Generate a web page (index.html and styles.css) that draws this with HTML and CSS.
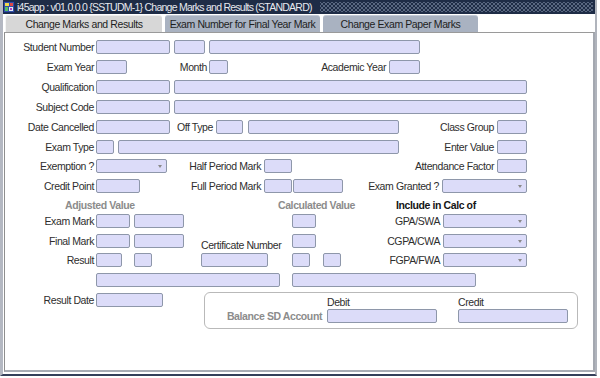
FILE: index.html
```html
<!DOCTYPE html>
<html>
<head>
<meta charset="utf-8">
<title>Change Marks and Results</title>
<link rel="stylesheet" href="styles.css">
</head>
<body>
<div class="window">
  <div class="titlebar">
    <svg class="appicon" width="12" height="12" viewBox="0 0 12 12">
      <rect x="0.5" y="0.5" width="11" height="11" fill="#3050a8" stroke="#1a2a60"/>
      <rect x="2" y="2" width="4" height="3" fill="#f2d84a"/>
      <rect x="7" y="2" width="3" height="3" fill="#e04848"/>
      <rect x="2" y="6" width="3" height="4" fill="#58c060"/>
      <rect x="6" y="6" width="4" height="4" fill="#e8e8f0"/>
      <rect x="7" y="7" width="2" height="2" fill="#b040c0"/>
    </svg>
    <span class="title">i45app : v01.0.0.0 {SSTUDM-1} Change Marks and Results (STANDARD)</span>
    <span class="dots"></span>
  </div>
  <div class="tabs">
    <div class="tab active">Change Marks and Results</div>
    <div class="tab">Exam Number for Final Year Mark</div>
    <div class="tab">Change Exam Paper Marks</div>
  </div>
  <div class="panel">
    <div class="row">
      <span class="lbl">Student Number</span>
      <input class="fld w74" type="text">
      <input class="fld w31 ml4" type="text">
      <input class="fld w211 ml4" type="text">
    </div>
    <div class="row">
      <span class="lbl">Exam Year</span>
      <input class="fld w31" type="text">
      <span class="lb w82 pr2">Month</span>
      <input class="fld w19" type="text">
      <span class="lb w161">Academic Year</span>
      <input class="fld w31" type="text">
    </div>
    <div class="row">
      <span class="lbl">Qualification</span>
      <input class="fld w74" type="text">
      <input class="fld w353 ml4" type="text">
    </div>
    <div class="row">
      <span class="lbl">Subject Code</span>
      <input class="fld w74" type="text">
      <input class="fld w353 ml4" type="text">
    </div>
    <div class="row">
      <span class="lbl">Date Cancelled</span>
      <input class="fld w74" type="text">
      <span class="lb w46">Off Type</span>
      <input class="fld w27" type="text">
      <input class="fld w151 ml5" type="text">
      <span class="lb w98">Class Group</span>
      <input class="fld w30" type="text">
    </div>
    <div class="row mb5">
      <span class="lbl">Exam Type</span>
      <input class="fld w18" type="text">
      <input class="fld w281 ml4" type="text">
      <span class="lb w98">Enter Value</span>
      <input class="fld w30" type="text">
    </div>
    <div class="row">
      <span class="lbl">Exemption ?</span>
      <div class="fld sel w71"><span class="arrow"></span></div>
      <span class="lb w97">Half Period Mark</span>
      <input class="fld w28" type="text">
      <span class="lb w205">Attendance Factor</span>
      <input class="fld w30" type="text">
    </div>
    <div class="row">
      <span class="lbl">Credit Point</span>
      <input class="fld w44" type="text">
      <span class="lb w124">Full Period Mark</span>
      <input class="fld w28" type="text">
      <input class="fld w50 ml1" type="text">
      <span class="lb w99">Exam Granted ?</span>
      <div class="fld sel w85"><span class="arrow"></span></div>
    </div>
    <div class="hdr">
      <span class="hd-adj">Adjusted Value</span>
      <span class="hd-calc">Calculated Value</span>
      <span class="hd-inc">Include in Calc of</span>
    </div>
    <div class="row">
      <span class="lbl">Exam Mark</span>
      <input class="fld w34" type="text">
      <input class="fld w50 ml4" type="text">
      <input class="fld w24 ml108" type="text">
      <span class="lb w127">GPA/SWA</span>
      <div class="fld sel w84"><span class="arrow"></span></div>
    </div>
    <div class="row mb5">
      <span class="lbl">Final Mark</span>
      <input class="fld w34" type="text">
      <input class="fld w50 ml4" type="text">
      <span class="cert">Certificate Number</span>
      <input class="fld w24" type="text">
      <span class="lb w127">CGPA/CWA</span>
      <div class="fld sel w84"><span class="arrow"></span></div>
    </div>
    <div class="row">
      <span class="lbl">Result</span>
      <input class="fld w26" type="text">
      <input class="fld w18 ml12" type="text">
      <input class="fld w67 ml49" type="text">
      <input class="fld w18 ml24" type="text">
      <input class="fld w18 ml13" type="text">
      <span class="lb w102">FGPA/FWA</span>
      <div class="fld sel w84"><span class="arrow"></span></div>
    </div>
    <div class="row mb5">
      <span class="lbl"></span>
      <input class="fld w184" type="text">
      <input class="fld w184 ml12" type="text">
    </div>
    <div class="row row-last">
      <span class="lbl">Result Date</span>
      <input class="fld w67" type="text">
      <fieldset class="group">
        <span></span>
        <span class="grp-head">Debit</span>
        <span></span>
        <span class="grp-head">Credit</span>
        <span class="grp-lbl">Balance SD Account</span>
        <input class="fld w110" type="text">
        <span></span>
        <input class="fld w110" type="text">
      </fieldset>
    </div>
  </div>
</div>
</body>
</html>
```

FILE: styles.css
```css
* { box-sizing: border-box; }
html, body { margin: 0; padding: 0; }
body {
  width: 600px;
  height: 378px;
  overflow: hidden;
  background: #ffffff;
  font-family: "Liberation Sans", Arial, sans-serif;
  font-size: 10.5px;
  letter-spacing: -0.4px;
  color: #2e2e2e;
}

.window {
  width: 597px;
  height: 376px;
  border-left: 3px solid #b4b8c2;
  border-right: 2px solid #b0b4bc;
  border-bottom: 2px solid #34405a;
  padding-bottom: 2px;
  display: flex;
  flex-direction: column;
}

/* title bar */
.titlebar {
  height: 14px;
  flex: none;
  background: #1e2c46;
  display: flex;
  align-items: center;
  color: #e6e8ee;
  font-size: 10.5px;
}
.appicon { flex: none; margin: 0 2px 0 0; }
.title { white-space: nowrap; letter-spacing: -0.75px; }
.dots {
  flex: 1;
  height: 10px;
  margin: 0 2px 0 8px;
  background-image:
    radial-gradient(circle, #6e7c95 0.6px, transparent 1px),
    radial-gradient(circle, #6e7c95 0.6px, transparent 1px);
  background-size: 4px 4px, 4px 4px;
  background-position: 0 0, 2px 2px;
}

/* tabs */
.tabs {
  height: 18px;
  flex: none;
  display: flex;
  align-items: flex-end;
  gap: 3px;
  padding-left: 2px;
}
.tab {
  width: 155px;
  height: 17px;
  display: flex;
  align-items: center;
  justify-content: center;
  background: #a9b2c1;
  border-top: 1px solid #c3cad6;
  border-radius: 3px 3px 0 0;
  color: #1e1e1e;
  white-space: nowrap;
}
.tab.active {
  width: 157px;
  background: #d7d7d7;
  border-top-color: #eeeeee;
  border-left: 1px solid #f4f4f4;
}

/* panel */
.panel {
  flex: 1;
  margin-left: 1px;
  border-top: 1px solid #9a9a9a;
  border-left: 1px solid #8e8e8e;
  border-right: 2px solid #a4a8b0;
  border-bottom: 2px solid #a8acb4;
  padding-top: 7px;
  background: #ffffff;
}

.row {
  display: flex;
  align-items: center;
  height: 14px;
  margin-bottom: 6px;
}
.mb5 { margin-bottom: 5px; }
.row-last { align-items: flex-start; height: auto; }
.row-last .lbl { margin-top: 1px; line-height: 14px; }
.row-last > .fld { margin-top: 1px; }

.lbl {
  flex: none;
  width: 91px;
  padding-right: 2px;
  text-align: right;
  white-space: nowrap;
}
.lb {
  flex: none;
  padding-right: 3px;
  text-align: right;
  white-space: nowrap;
}
.pr2 { padding-right: 2px; }

.fld {
  flex: none;
  display: block;
  height: 14px;
  margin: 0;
  padding: 0;
  border: 1px solid #8e97aa;
  border-radius: 2px;
  background: #dcdcf9;
  font: inherit;
  outline: none;
  -webkit-appearance: none;
  appearance: none;
}
.sel {
  display: flex;
  align-items: center;
  justify-content: flex-end;
}
.arrow {
  width: 0;
  height: 0;
  margin-right: 4px;
  border-left: 2.5px solid transparent;
  border-right: 2.5px solid transparent;
  border-top: 3px solid #8a8a8a;
}

/* widths */
.w18 { width: 18px; }
.w19 { width: 19px; }
.w24 { width: 24px; }
.w26 { width: 26px; }
.w27 { width: 27px; }
.w28 { width: 28px; }
.w30 { width: 30px; }
.w31 { width: 31px; }
.w34 { width: 34px; }
.w44 { width: 44px; }
.w46 { width: 46px; }
.w50 { width: 50px; }
.w67 { width: 67px; }
.w71 { width: 71px; }
.w74 { width: 74px; }
.w82 { width: 82px; }
.w84 { width: 84px; }
.w85 { width: 85px; }
.w97 { width: 97px; }
.w98 { width: 98px; }
.w99 { width: 99px; }
.w102 { width: 102px; }
.w110 { width: 110px; }
.w124 { width: 124px; }
.w127 { width: 127px; }
.w151 { width: 151px; }
.w161 { width: 161px; }
.w184 { width: 184px; }
.w205 { width: 205px; }
.w211 { width: 211px; }
.w281 { width: 281px; }
.w353 { width: 353px; }

/* left margins */
.ml1 { margin-left: 1px; }
.ml4 { margin-left: 4px; }
.ml5 { margin-left: 5px; }
.ml12 { margin-left: 12px; }
.ml13 { margin-left: 13px; }
.ml24 { margin-left: 24px; }
.ml49 { margin-left: 49px; }
.ml108 { margin-left: 108px; }

/* section header */
.hdr {
  display: flex;
  height: 12px;
  line-height: 12px;
  margin-bottom: 3px;
  font-weight: bold;
  white-space: nowrap;
}
.hd-adj { margin-left: 60px; width: 213px; color: #8c8c8c; }
.hd-calc { width: 118px; color: #8c8c8c; }
.hd-inc { color: #151515; }

.cert {
  flex: none;
  width: 108px;
  padding-left: 17px;
  align-self: flex-start;
  margin-top: 4px;
  line-height: 14px;
  white-space: nowrap;
}

/* group box */
.group {
  flex: none;
  margin: 0 0 0 41px;
  width: 374px;
  height: 37px;
  padding: 3px 0 0 0;
  border: 1px solid #b9b9b9;
  border-radius: 6px;
  display: grid;
  grid-template-columns: 122px 110px 21px 110px;
  grid-template-rows: 12px 14px;
  row-gap: 1px;
  align-items: center;
}
.grp-head { line-height: 12px; white-space: nowrap; }
.grp-lbl {
  text-align: right;
  padding-right: 5px;
  font-weight: bold;
  color: #8c8c8c;
  white-space: nowrap;
}
```
